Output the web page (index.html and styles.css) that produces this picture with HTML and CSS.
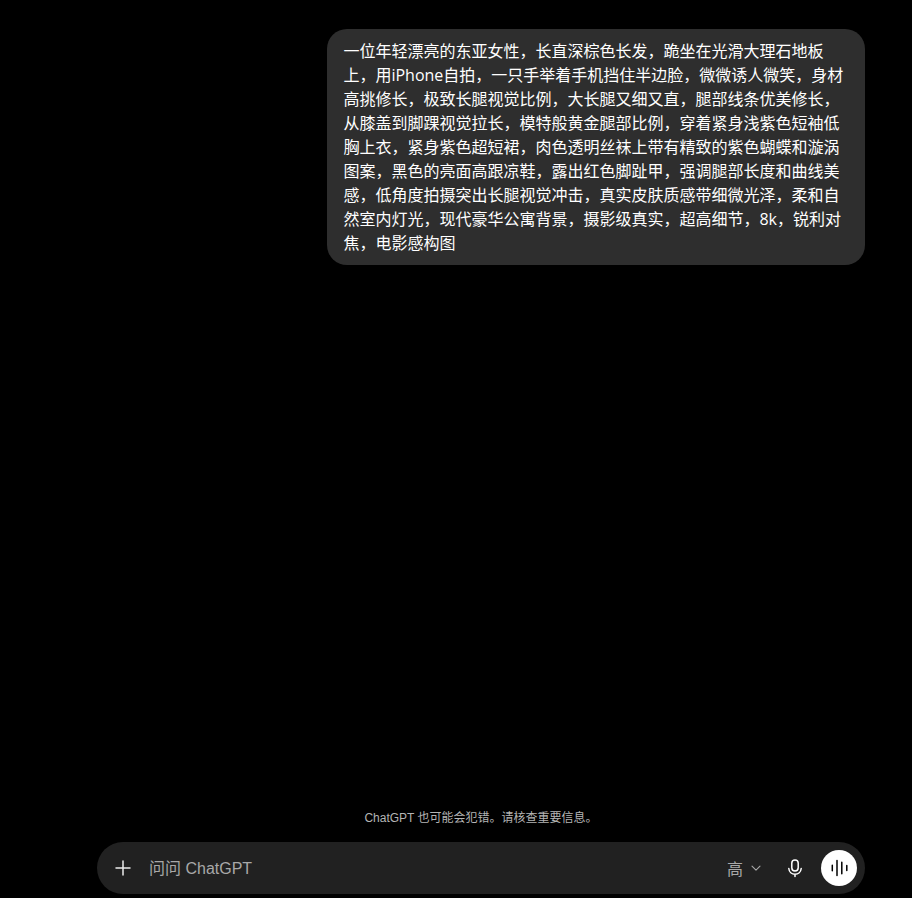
FILE: index.html
```html
<!DOCTYPE html>
<html lang="zh-CN">

<head>
    <meta charset="UTF-8">
    <meta name="viewport" content="width=device-width, initial-scale=1.0">
    <title>ChatGPT</title>
    <link rel="stylesheet" href="styles.css">
</head>

<body>
    <main class="page">
        <div class="thread">
            <div class="bubble">一位年轻漂亮的东亚女性，长直深棕色长发，跪坐在光滑大理石地板上，用iPhone自拍，一只手举着手机挡住半边脸，微微诱人微笑，身材高挑修长，极致长腿视觉比例，大长腿又细又直，腿部线条优美修长，从膝盖到脚踝视觉拉长，模特般黄金腿部比例，穿着紧身浅紫色短袖低胸上衣，紧身紫色超短裙，肉色透明丝袜上带有精致的紫色蝴蝶和漩涡图案，黑色的亮面高跟凉鞋，露出红色脚趾甲，强调腿部长度和曲线美感，低角度拍摄突出长腿视觉冲击，真实皮肤质感带细微光泽，柔和自然室内灯光，现代豪华公寓背景，摄影级真实，超高细节，8k，锐利对焦，电影感构图</div>
        </div>
        <p class="notice">ChatGPT 也可能会犯错。请核查重要信息。</p>
        <div class="composer">
            <button class="icon-btn plus">
                <svg width="20" height="20" viewBox="0 0 20 20" fill="none" stroke="currentColor" stroke-width="1.5" stroke-linecap="round">
                    <path d="M10 3v14M3 10h14" />
                </svg>
            </button>
            <span class="placeholder">问问 ChatGPT</span>
            <span class="effort">高
                <svg width="12" height="12" viewBox="0 0 12 12" fill="none" stroke="currentColor" stroke-width="1.1" stroke-linecap="round" stroke-linejoin="round">
                    <path d="M2 4.200l4 4 4-4" />
                </svg>
            </span>
            <button class="icon-btn mic">
                <svg width="20" height="20" viewBox="0 0 20 20" fill="none" stroke="currentColor" stroke-width="1.5" stroke-linecap="round">
                    <rect x="6.800" y="1.900" width="6.400" height="11" rx="3.200" />
                    <path d="M3.800 10.500c.3 3.400 3 5.700 6.200 5.700s5.900-2.300 6.200-5.700M10 16.200v2.300" />
                </svg>
            </button>
            <button class="voice">
                <svg width="20" height="20" viewBox="0 0 20 20" fill="none" stroke="currentColor" stroke-width="1.5" stroke-linecap="round">
                    <path d="M3.300 7.200v5.600M8 2.600v14.800M12.800 4.200v11.600M17.800 7.400v5.200" />
                </svg>
            </button>
        </div>
    </main>
</body>

</html>
```

FILE: styles.css
```css
* {
    box-sizing: border-box;
}

body {
    margin: 0;
    background-color: #000;
    color: #fff;
    font-family: "Liberation Sans", "Noto Sans CJK SC", sans-serif;
}

.page {
    display: flex;
    flex-direction: column;
    width: 768px;
    height: 898px;
    margin-left: 97px;
    padding: 29px 0 4px;
}

.thread {
    flex: 1;
    display: flex;
    justify-content: flex-end;
    align-items: flex-start;
}

.bubble {
    max-width: 70%;
    padding: 10px 16px;
    background-color: #2e2e2e;
    border-radius: 20px;
    font-family: "Open Sans", "Noto Sans CJK SC", sans-serif;
    font-size: 16px;
    line-height: 24px;
}

.notice {
    margin: 0 0 16px;
    font-size: 12px;
    line-height: 16px;
    text-align: center;
    color: #b4b4b4;
}

.composer {
    display: flex;
    align-items: center;
    height: 52px;
    padding: 0 8px 0 16px;
    background-color: #212121;
    border-radius: 26px;
}

.icon-btn,
.voice {
    display: flex;
    align-items: center;
    justify-content: center;
    padding: 0;
    border: none;
    background: none;
    color: #fff;
}

.plus {
    width: 20px;
    height: 20px;
    color: #ececec;
}

.placeholder {
    flex: 1;
    margin: 0 0 2px 16px;
    font-size: 16px;
    color: #a8a8a8;
}

.effort {
    display: flex;
    align-items: center;
    gap: 7px;
    font-size: 16px;
    color: #a8a8a8;
}

.mic {
    width: 20px;
    height: 20px;
    margin-left: 23px;
}

.voice {
    width: 36px;
    height: 36px;
    margin-left: 16px;
    background-color: #fff;
    border-radius: 50%;
    color: #000;
}
```
